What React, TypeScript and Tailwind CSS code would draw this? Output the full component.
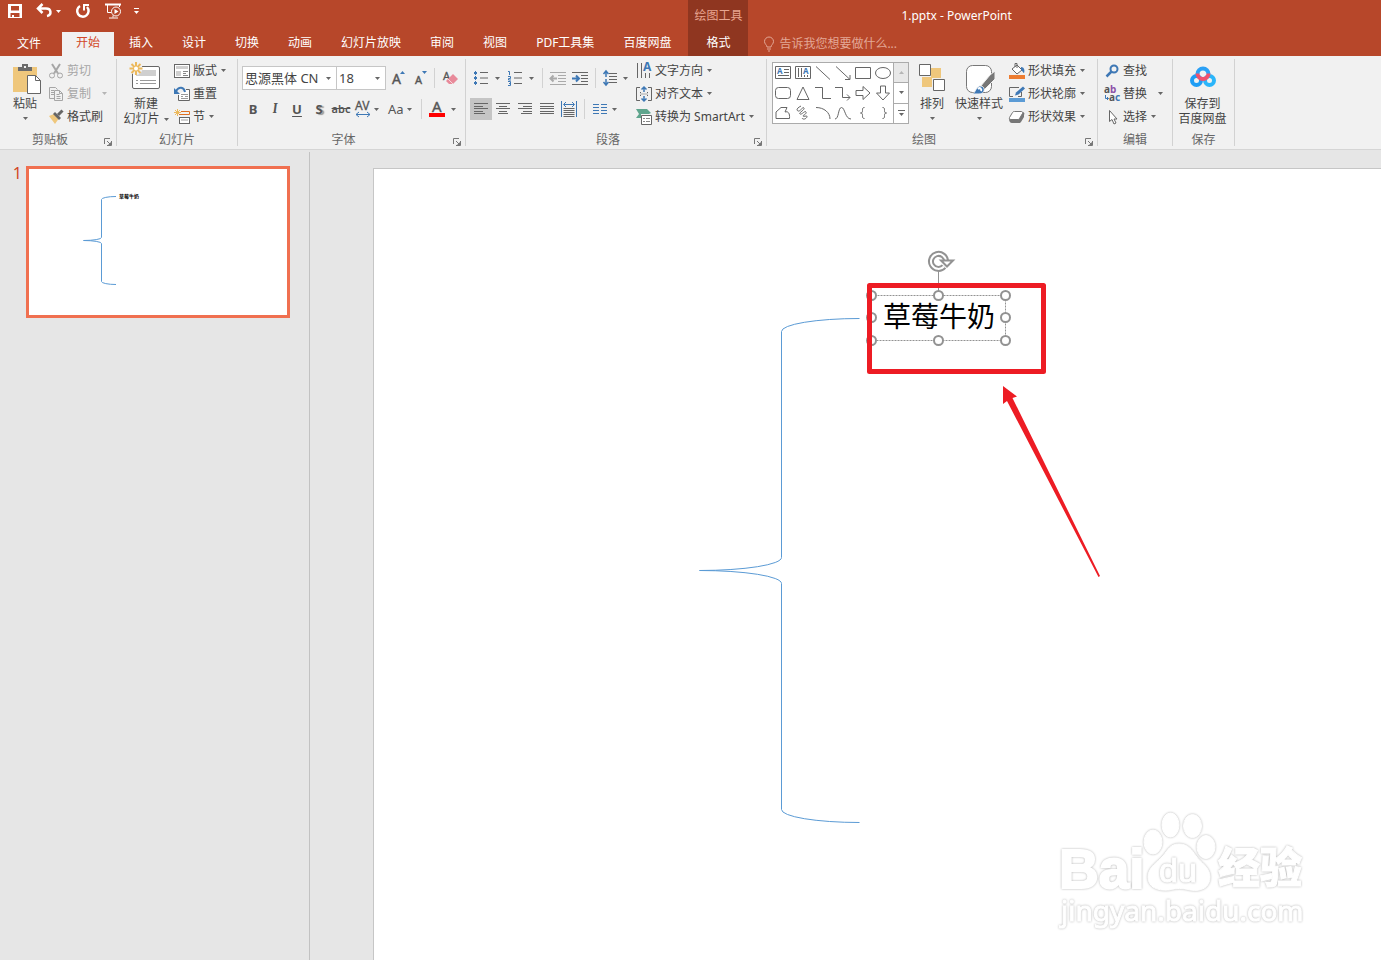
import React from 'react';
import { clsx } from 'clsx';

type IconProps = { w?: number; h?: number; children: React.ReactNode; className?: string };

function Icon({ w = 16, h = 16, children, className }: IconProps) {
  return (
    <svg
      width={w}
      height={h}
      viewBox={`0 0 ${w} ${h}`}
      fill="none"
      stroke="#666"
      className={clsx('shrink-0 overflow-visible', className)}
      aria-hidden="true"
    >
      {children}
    </svg>
  );
}

function Caret({ className = 'text-[#666]' }: { className?: string }) {
  return (
    <svg width="5" height="3" viewBox="0 0 5 3" fill="currentColor" className={clsx('shrink-0', className)} aria-hidden="true">
      <path d="M0 0h5L2.5 3z" />
    </svg>
  );
}

function Launcher({ label }: { label: string }) {
  return (
    <button aria-label={label} className="flex h-3 w-4 items-center justify-center pt-1">
      <Icon w={8} h={8}>
        <path d="M.5 6V.5H6M3 3l3 3M7.5 3v4.5H3" stroke="#777" />
        <path d="M7 4v3H4z" fill="#777" stroke="none" />
      </Icon>
    </button>
  );
}

function Group({ title, launcher, className, children }: {
  title: string;
  launcher?: boolean;
  className?: string;
  children: React.ReactNode;
}) {
  return (
    <section aria-label={title} className={clsx('flex shrink-0 flex-col border-r border-[#d2d2d2]', className)}>
      <div className="flex h-[70px] items-start">{children}</div>
      <div className="mt-auto flex h-3 items-center">
        <span className="flex-1 text-center leading-4 text-[#666]">{title}</span>
        {launcher && <Launcher label={`${title}设置`} />}
      </div>
    </section>
  );
}

function RowButton({ icon, label, caret, disabled, wide }: {
  icon: React.ReactNode;
  label: string;
  caret?: boolean;
  disabled?: boolean;
  wide?: boolean;
}) {
  return (
    <button disabled={disabled} className={clsx('flex h-[23px] items-center gap-[3px] whitespace-nowrap', disabled && 'text-[#a6a6a6]')}>
      {icon}
      <span>{label}</span>
      {caret && <Caret className={clsx(disabled ? 'text-[#b5b5b5]' : 'text-[#666]', wide ? 'ml-2' : 'ml-px')} />}
    </button>
  );
}

function ToolButton({ label, children, caret, active, className }: {
  label: string;
  children: React.ReactNode;
  caret?: boolean;
  active?: boolean;
  className?: string;
}) {
  return (
    <button aria-label={label} className={clsx('flex h-[22px] shrink-0 items-center justify-center gap-[3px]', active && 'bg-[#c5c5c5]', className)}>
      {children}
      {caret && <Caret />}
    </button>
  );
}

function Divider() {
  return <span className="h-5 w-px shrink-0 bg-[#d2d2d2]" />;
}

/* ---------- header ---------- */

function QuickAccess() {
  return (
    <div className="flex h-8 items-start pl-[7px] pt-[3px]">
      <button aria-label="保存">
        <Icon>
          <path
            d="M1 1h14v14H1zM4 3v4.500h8V3zM3.500 10v4H5v-2h2v2h5.500v-4z"
            fill="#fff"
            fillRule="evenodd"
            stroke="none"
          />
        </Icon>
      </button>
      <button aria-label="撤消" className="ml-[13px] flex items-center gap-1">
        <Icon>
          <path d="M6.500 1L2 5.500 6.500 10M2.500 5.500H10c5.500 0 6 6.500 1 7.500" stroke="#fff" strokeWidth="2.500" />
        </Icon>
        <Caret className="text-white" />
      </button>
      <button aria-label="重复" className="ml-[14px]">
        <Icon>
          <path d="M5 3A5.700 5.700 0 1 0 12 4" stroke="#fff" strokeWidth="2.500" />
          <path d="M9 7.500V2h5" stroke="#fff" strokeWidth="2" />
        </Icon>
      </button>
      <button aria-label="从头开始" className="ml-[14px]">
        <Icon w={17} h={16} className="stroke-white">
          <path d="M0 1.500h16" strokeWidth="2" />
          <path d="M2.500 2v7.500H6M4 15h9M8 12.500v2M14.500 2v2" />
          <circle cx="11" cy="8.500" r="4.500" />
          <path d="M9.500 6l4 2.500-4 2.500z" fill="#fff" stroke="none" />
        </Icon>
      </button>
      <button aria-label="自定义快速访问工具栏" className="ml-3">
        <Icon w={6} h={16}>
          <path d="M0 5.500h5" stroke="#fff" />
          <path d="M0 8h5L2.500 11z" fill="#fff" stroke="none" />
        </Icon>
      </button>
    </div>
  );
}

const tabs = ['开始', '插入', '设计', '切换', '动画', '幻灯片放映', '审阅', '视图', 'PDF工具集', '百度网盘'];

function Header() {
  return (
    <header className="flex h-14 shrink-0 bg-[#b7472a] text-white">
      <div className="flex shrink-0 flex-col">
        <QuickAccess />
        <nav className="flex h-6">
          <button className="mr-1 w-[58px]">文件</button>
          <div className="flex gap-px pr-[3px]">
            {tabs.map((tab, i) => (
              <button
                key={tab}
                className={clsx('whitespace-nowrap px-[14px] pb-[2px]', i === 0 && 'bg-[#f1f1f1] text-[#d24726]')}
              >
                {tab}
              </button>
            ))}
          </div>
        </nav>
      </div>
      <div className="flex w-[60px] shrink-0 flex-col items-center bg-[#8f3620]">
        <span className="flex h-8 items-center text-[#e8a48f]">绘图工具</span>
        <button className="h-6 w-full pb-[2px]">格式</button>
      </div>
      <div className="flex min-w-0 flex-1 flex-col">
        <h1 className="flex h-8 items-center pl-[153px]">1.pptx - PowerPoint</h1>
        <label className="flex h-6 items-center gap-1 pl-[15px]">
          <Icon w={12} h={16}>
            <path d="M4 11c0-2-2.500-3-2.500-5.500a4.500 4.500 0 0 1 9 0C10.500 8 8 9 8 11zM4 13h4M5 15h2" stroke="#e3a897" />
          </Icon>
          <input
            aria-label="告诉我您想要做什么"
            placeholder="告诉我您想要做什么..."
            className="w-44 bg-transparent placeholder:text-[#e3a897] focus:outline-none"
          />
        </label>
      </div>
    </header>
  );
}

/* ---------- ribbon groups ---------- */

function ClipboardGroup() {
  return (
    <Group title="剪贴板" launcher className="w-[117px]">
      <button className="ml-[9px] flex w-8 flex-col items-center pt-1">
        <Icon w={30} h={32} className="mb-px ml-1">
          <path d="M1 4h24v25H1z" fill="#efc77c" stroke="none" />
          <path d="M6 8V4h4V1h6v3h4v4z" fill="#6b6b6b" stroke="none" />
          <path d="M12 3h2v2h-2z" fill="#f1f1f1" stroke="none" />
          <path d="M15.500 12.500h8l5 5v13h-13z" fill="#fff" />
          <path d="M23.500 12.500v5h5" />
        </Icon>
        <span className="whitespace-nowrap leading-4">粘贴</span>
        <Caret className="mt-[5px] text-[#666]" />
      </button>
      <div className="ml-[7px] flex flex-col">
        <RowButton
          disabled
          label="剪切"
          icon={
            <Icon className="stroke-[#a6a6a6]">
              <path d="M4 1l6 9.500M12 1L6 10.500" strokeWidth="2" />
              <circle cx="4" cy="12.500" r="2.500" />
              <circle cx="12" cy="12.500" r="2.500" />
            </Icon>
          }
        />
        <RowButton
          disabled
          caret
          wide
          label="复制"
          icon={
            <Icon className="stroke-[#a6a6a6]">
              <path d="M6 12.500H1.500v-11h6l2 2M3 4.500h3M3 6.500h3M3 8.500h3" />
              <path d="M6.500 4.500h5l3 3v7h-8zM11.500 4.500v3h3M8.500 8.500h3M8.500 10.500h4M8.500 12.500h4" />
            </Icon>
          }
        />
        <RowButton
          label="格式刷"
          icon={
            <Icon>
              <path d="M1 7l5-2 4.500 5L7 15z" fill="#efc77c" stroke="none" />
              <path d="M7 3l6 6-2 2-6-6z" fill="#666" stroke="none" />
              <path d="M10 6l4.500-4.500" strokeWidth="3" />
            </Icon>
          }
        />
      </div>
    </Group>
  );
}

function SlidesGroup() {
  return (
    <Group title="幻灯片" className="w-[121px]">
      <button className="ml-[6px] flex w-[46px] flex-col items-center whitespace-nowrap pt-1">
        <Icon w={32} h={32} className="mb-px">
          <rect x="2.500" y="3.500" width="27" height="22" rx="1.500" fill="#fff" />
          <path d="M6 7h20v6H6z" fill="#cfcfcf" stroke="none" />
          <path d="M6 17.500h2M10 17.500h16M6 20.500h2M10 20.500h16" stroke="#999" />
          <circle cx="6" cy="5.500" r="6.500" fill="#f1f1f1" stroke="none" />
          <path d="M6-1v13M-.5 5.500h13M1.500 1l9 9M10.500 1l-9 9" stroke="#ecb95c" strokeWidth="2" />
          <circle cx="6" cy="5.500" r="2" fill="#fff" stroke="none" />
        </Icon>
        <span className="leading-4">新建</span>
        <span className="flex items-center gap-1 leading-[14px]">
          幻灯片
          <Caret />
        </span>
      </button>
      <div className="ml-[5px] flex flex-col">
        <RowButton
          caret
          label="版式"
          icon={
            <Icon>
              <rect x=".5" y="1.500" width="15" height="13" fill="#fff" />
              <path d="M2 3h12v3H2zM2 8h5v5H2z" fill="#cfcfcf" stroke="none" />
              <path d="M9 8.500h5M9 10.500h3M9 12.500h5" stroke="#888" />
            </Icon>
          }
        />
        <RowButton
          label="重置"
          icon={
            <Icon>
              <path d="M4.500 9v5.500h11v-11H12" fill="#fff" />
              <path d="M7 8.500h7M7 10.500h2M11 10.500h3M7 12.500h7" stroke="#999" />
              <path d="M2 5c3-5 8-4 9 1" stroke="#3e78b5" strokeWidth="2" />
              <path d="M0 2v6h6z" fill="#3e78b5" stroke="none" />
            </Icon>
          }
        />
        <RowButton
          caret
          label="节"
          icon={
            <Icon>
              <path d="M3.500 0v7M0 3.500h7M1 1l5 5M6 1L1 6" stroke="#ecb95c" />
              <path d="M7 2.500h8.500v3M5 5.500h10.500" stroke="#e07020" />
              <rect x="5.500" y="8.500" width="10" height="6" fill="#fff" />
              <path d="M7 10h7v2H7z" fill="#cfcfcf" stroke="none" />
            </Icon>
          }
        />
      </div>
    </Group>
  );
}

function Combo({ label, value, className }: { label: string; value: string; className?: string }) {
  return (
    <div className={clsx('relative border border-[#c6c6c6] bg-white', className)}>
      <select aria-label={label} defaultValue={value} className="h-[22px] w-full appearance-none pl-[2px] text-[13px] text-[#444] focus:outline-none">
        <option>{value}</option>
      </select>
      <Caret className="pointer-events-none absolute right-[5px] top-[10px] text-[#666]" />
    </div>
  );
}

function FontGroup() {
  return (
    <Group title="字体" launcher className="w-[228px]">
      <div className="flex w-full flex-col gap-2 pl-1 pt-[7px]">
        <div className="flex items-center">
          <Combo label="字体" value="思源黑体 CN" className="w-[95px]" />
          <Combo label="字号" value="18" className="-ml-px w-[50px]" />
          <ToolButton label="增大字号" className="ml-[6px]">
            <Icon w={14}>
              <text x="0" y="14" fontSize="14" fill="#555" stroke="#555" strokeWidth=".4">A</text>
              <path d="M8 4l2.500-3L13 4z" fill="#3e78b5" stroke="none" />
            </Icon>
          </ToolButton>
          <ToolButton label="减小字号" className="ml-2">
            <Icon w={14}>
              <text x="1" y="14" fontSize="11" fill="#555" stroke="#555" strokeWidth=".4">A</text>
              <path d="M8 1l2.500 3L13 1z" fill="#3e78b5" stroke="none" />
            </Icon>
          </ToolButton>
          <span className="ml-[6px]" />
          <Divider />
          <ToolButton label="清除所有格式" className="ml-2">
            <Icon>
              <text x="0" y="10" fontSize="11" fill="#555" stroke="#555" strokeWidth=".3">A</text>
              <path d="M3 11l7-7 5 5-5 5H6z" fill="#e88a9a" stroke="none" />
              <path d="M5 9l5 5" stroke="#f7d5da" />
            </Icon>
          </ToolButton>
        </div>
        <div className="flex items-center text-[13px] leading-4 text-[#555]">
          <ToolButton label="加粗" className="w-[22px] font-bold">B</ToolButton>
          <ToolButton label="倾斜" className="w-[22px] font-serif font-bold italic">I</ToolButton>
          <ToolButton label="下划线" className="w-[22px] font-bold underline underline-offset-2">U</ToolButton>
          <ToolButton label="文字阴影" className="w-[22px] font-bold [text-shadow:2px_1px_1px_#999]">S</ToolButton>
          <ToolButton label="删除线" className="w-[22px] text-[11px] font-semibold line-through">abc</ToolButton>
          <ToolButton label="字符间距" caret className="ml-[3px]">
            <Icon>
              <text x="0" y="9" fontSize="12" fill="#555" stroke="#555" strokeWidth=".3">AV</text>
              <path d="M1 13.500h14M4 11l-3 2.500L4 16M12 11l3 2.500-3 2.500" stroke="#3e78b5" />
            </Icon>
          </ToolButton>
          <ToolButton label="更改大小写" caret className="ml-[9px]">Aa</ToolButton>
          <span className="ml-[9px]" />
          <Divider />
          <ToolButton label="字体颜色" caret className="ml-[7px] gap-[6px]">
            <Icon>
              <text x="3" y="11" fontSize="15" fill="#555" stroke="#555" strokeWidth=".4">A</text>
              <path d="M0 12h16v4H0z" fill="#f00" stroke="none" />
            </Icon>
          </ToolButton>
        </div>
      </div>
    </Group>
  );
}

// horizontal rules of a text-alignment glyph, as [start, end] pairs
function AlignIcon({ rows }: { rows: [number, number][] }) {
  return (
    <Icon w={14} h={12}>
      {rows.map(([a, b], i) => (
        <path key={i} d={`M${a} ${i * 2.5 + 0.5}H${b}`} shapeRendering="crispEdges" />
      ))}
    </Icon>
  );
}

function ParagraphGroup() {
  return (
    <Group title="段落" launcher className="w-[301px]">
      <div className="flex w-[168px] shrink-0 flex-col gap-[9px] pl-1 pt-2">
        <div className="flex items-center">
          <ToolButton label="项目符号" caret className="ml-1 gap-[6px]">
            <Icon w={15}>
              <path d="M0 2h3v2H0zM0 7h3v2H0zM0 12h3v2H0zM1 1h1v4H1zM1 6h1v4H1zM1 11h1v4H1z" fill="#3e78b5" stroke="none" />
              <path d="M6 2.500h8M6 8h8M6 13.500h8" />
            </Icon>
          </ToolButton>
          <ToolButton label="编号" caret className="ml-2 gap-[6px]">
            <Icon w={15}>
              <path d="M0 1.500h1.500V5M0 6.500h2.500v2H.5v1.500H3M0 11.500h2.500v4H0M1 13.500h1.500" stroke="#3e78b5" />
              <path d="M6 2.500h8M6 8h8M6 13.500h8" />
            </Icon>
          </ToolButton>
          <span className="ml-2" />
          <Divider />
          <ToolButton label="降低列表级别" className="ml-[7px]">
            <Icon className="stroke-[#aaa]">
              <path d="M0 2.500h16M8 5.500h8M8 8.500h8M8 11.500h8M0 14.500h16" />
              <path d="M0 8.500h7M3.500 5.500l-3 3 3 3" strokeWidth="2" />
            </Icon>
          </ToolButton>
          <ToolButton label="提高列表级别" className="ml-[6px]">
            <Icon>
              <path d="M0 2.500h16M9 5.500h7M9 8.500h7M9 11.500h7M0 14.500h16" />
              <path d="M0 8.500h7M4 5.500l3 3-3 3" stroke="#3e78b5" strokeWidth="2" />
            </Icon>
          </ToolButton>
          <span className="ml-[7px]" />
          <Divider />
          <ToolButton label="行距" caret className="ml-[7px] gap-[5px]">
            <Icon w={15}>
              <path d="M3 1v6M0.500 4L3 1l2.500 3M3 9v6M.5 12L3 15l2.500-3" stroke="#3e78b5" strokeWidth="1.500" />
              <path d="M6 3.500h8M6 6.500h8M6 9.500h8M6 12.500h8" />
            </Icon>
          </ToolButton>
        </div>
        <div className="flex items-center">
          <ToolButton label="左对齐" active className="w-[22px]">
            <AlignIcon rows={[[0, 14], [0, 9], [0, 14], [0, 9], [0, 11]]} />
          </ToolButton>
          <ToolButton label="居中" className="w-[22px]">
            <AlignIcon rows={[[0, 14], [3, 11], [0, 14], [3, 11], [2, 12]]} />
          </ToolButton>
          <ToolButton label="右对齐" className="w-[22px]">
            <AlignIcon rows={[[0, 14], [5, 14], [0, 14], [5, 14], [3, 14]]} />
          </ToolButton>
          <ToolButton label="两端对齐" className="w-[22px]">
            <AlignIcon rows={[[0, 14], [0, 14], [0, 14], [0, 14], [0, 14]]} />
          </ToolButton>
          <ToolButton label="分散对齐" className="w-[22px]">
            <Icon>
              <path d="M.5 0v16M15.500 0v16M3 3.500h10M5 1L2.500 3.500 5 6M11 1l2.500 2.500L11 6" stroke="#3e78b5" />
              <path d="M2.500 7.500h11M2.500 9.500h11M2.500 11.500h11M2.500 13.500h11M2.500 15.500h11" />
            </Icon>
          </ToolButton>
          <span className="ml-1" />
          <Divider />
          <ToolButton label="分栏" caret className="ml-2 gap-[5px]">
            <Icon w={14} h={12}>
              <path d="M0 1.500h6M0 4.500h6M0 7.500h6M0 10.500h6M8 1.500h6M8 4.500h6M8 7.500h6M8 10.500h6" stroke="#3e78b5" />
            </Icon>
          </ToolButton>
        </div>
      </div>
      <div className="ml-[2px] flex flex-col">
        <RowButton
          caret
          label="文字方向"
          icon={
            <Icon>
              <path d="M1.500 0v15M5.500 0v15M9.500 10v5M13.500 10v5" />
              <text x="7" y="8" fontSize="12" fontWeight="700" fill="#3e78b5" stroke="none">A</text>
            </Icon>
          }
        />
        <RowButton
          caret
          label="对齐文本"
          icon={
            <Icon>
              <path d="M4 1.500H.5v13H4M12 1.500h3.500v13H12M4 6.500h1M11 6.500h1M4 9.500h1M11 9.500h1" />
              <path d="M8 1v5M5.500 3.500L8 1l2.500 2.500M8 10v5M5.500 12.500L8 15l2.500-2.500" stroke="#3e78b5" strokeWidth="1.500" />
              <path d="M4 8h8" stroke="#aaa" />
            </Icon>
          }
        />
        <RowButton
          caret
          label="转换为 SmartArt"
          icon={
            <Icon>
              <path d="M0 0h11l4 4-2 1H5v4H0l3-4z" fill="#5fa58d" stroke="none" />
              <path d="M5.500 6.500h10v9h-10z" fill="#fff" />
              <path d="M7 9.500h2M10 9.500h4M7 12.500h2M10 12.500h4" stroke="#888" />
            </Icon>
          }
        />
      </div>
    </Group>
  );
}

const shapes: { name: string; body: React.ReactNode }[] = [
  {
    name: '文本框',
    body: (
      <>
        <path d="M.5 1.500h15v12H.5zM9 4.500h5M9 7.500h5M3 10.500h11" />
        <text x="2" y="9" fontSize="8" fontWeight="700" fill="#3e78b5" stroke="none">A</text>
      </>
    ),
  },
  {
    name: '垂直文本框',
    body: (
      <>
        <path d="M.5 1.500h15v12H.5zM3.500 3v9M6.500 3v9M9.500 10v2M12.500 10v2" />
        <text x="8" y="9" fontSize="8" fontWeight="700" fill="#3e78b5" stroke="none">A</text>
      </>
    ),
  },
  { name: '直线', body: <path d="M1 1.500l14 13" /> },
  { name: '箭头', body: <path d="M1 1.500l14 13M15 10v4.500h-5" /> },
  { name: '矩形', body: <path d="M.5 2.500h15v11H.5z" /> },
  { name: '椭圆', body: <ellipse cx="8" cy="8" rx="7.500" ry="5.500" /> },
  { name: '圆角矩形', body: <rect x=".5" y="2.500" width="15" height="11" rx="3" /> },
  { name: '三角形', body: <path d="M8 2L14 14.500H2z" /> },
  { name: '肘形连接符', body: <path d="M0 2.500h7.500v11H16" /> },
  { name: '肘形箭头', body: <path d="M0 2.500h7.500v10H15M12 9.500l3 3-3 3" /> },
  { name: '右箭头', body: <path d="M1 5.500h7V1.500L15 8l-7 6.500v-4H1z" /> },
  { name: '下箭头', body: <path d="M5.500 1v7H1.500L8 15l6.500-7h-4V1z" /> },
  { name: '任意多边形', body: <path d="M1 13.500V7l5-4.500h6l-2 4.500c3-1 5 1 4.500 6.500z" /> },
  { name: '曲线', body: <path d="M6 1c-4 2-5 4-3 5s5-5 6-3-6 5-4 6 5-4 6-2-3 3-3 4 5-1 4 1-4 3-5 1" /> },
  { name: '弧形', body: <path d="M1 2.500c8 0 14 5 14 11.500" /> },
  { name: '正弦曲线', body: <path d="M0 14c4 0 3-11.500 6.500-11.500S10 14 16 14" /> },
  { name: '左大括号', body: <path d="M9.500 2.500c-2 0-2 1-2 3s-.5 2.500-2 2.500c1.500 0 2 .5 2 2.500s0 3 2 3" /> },
  { name: '右大括号', body: <path d="M7.500 2.500c2 0 2 1 2 3s.5 2.500 2 2.500c-1.500 0-2 .5-2 2.500s0 3-2 3" /> },
];

function DrawingGroup() {
  return (
    <Group title="绘图" launcher className="w-[331px]">
      <div className="ml-[5px] mt-[3px] flex border border-[#ababab] bg-white">
        <div className="grid grid-cols-[repeat(6,20px)] grid-rows-[repeat(3,20px)]">
          {shapes.map((s) => (
            <button key={s.name} aria-label={s.name} className="flex items-center justify-center">
              <Icon>{s.body}</Icon>
            </button>
          ))}
        </div>
        <div className="flex w-[15px] flex-col divide-y divide-[#ababab] border-l border-[#ababab]">
          <button aria-label="上一行" disabled className="flex flex-1 items-center justify-center bg-[#e8e8e8]">
            <Caret className="rotate-180 text-[#b5b5b5]" />
          </button>
          <button aria-label="下一行" className="flex flex-1 items-center justify-center">
            <Caret />
          </button>
          <button aria-label="其他形状" className="flex flex-1 flex-col items-center justify-center gap-[2px]">
            <span className="h-px w-[7px] bg-[#666]" />
            <Caret />
          </button>
        </div>
      </div>
      <button className="ml-[7px] flex w-8 flex-col items-center whitespace-nowrap pt-1">
        <Icon w={28} h={32} className="mb-px">
          <path d="M13 5h10v10H13zM4 14h10v10H4z" fill="#efc77c" stroke="none" />
          <path d="M1.500 1.500h11v11h-11zM15.500 16.500h11v11h-11z" fill="#fff" />
        </Icon>
        <span className="leading-4">排列</span>
        <Caret className="mt-[5px] text-[#666]" />
      </button>
      <button className="ml-[6px] flex w-[50px] flex-col items-center whitespace-nowrap pt-1">
        <Icon w={32} h={32} className="mb-px">
          <rect x="3.500" y="2.500" width="25" height="27" rx="6" fill="#fff" stroke="#777" />
          <path d="M32 8v8L21 27l-4-3 10-12z" fill="#777" stroke="#f1f1f1" />
          <path d="M9 31c4-1 4-9 9-8 5 1 4 8-2 8z" fill="#3e78b5" stroke="#f1f1f1" />
          <path d="M15 26c2-2 4 0 3 2" stroke="#fff" strokeWidth="2" />
        </Icon>
        <span className="leading-4">快速样式</span>
        <Caret className="mt-[5px] text-[#666]" />
      </button>
      <div className="ml-[5px] flex flex-col">
        <RowButton
          caret
          label="形状填充"
          icon={
            <Icon>
              <path d="M3 6l5-4 5 5-5 4zM6 4V.5h2V5" fill="#fff" />
              <path d="M12 4c3 0 4 3 3 6-1 0-1-2-3-3z" fill="#3e78b5" stroke="none" />
              <path d="M0 12h16v4H0z" fill="#ed7d31" stroke="none" />
            </Icon>
          }
        />
        <RowButton
          caret
          label="形状轮廓"
          icon={
            <Icon>
              <path d="M10 1.500H.5v9H4M12.500 6v4.500H9" />
              <path d="M6 9.500l1-3 7-6 2 2-6.500 6z" fill="#3e78b5" stroke="none" />
              <path d="M0 12h16v4H0z" fill="#5b9bd5" stroke="none" />
            </Icon>
          }
        />
        <RowButton
          caret
          label="形状效果"
          icon={
            <Icon>
              <path d="M6 3h7c2 0 3 1 2 3v2l-3 5c-1 1-1 1-2 1H3c-2 0-3-2-3-4z" fill="#777" stroke="none" />
              <path d="M5.500 2.500h7c1 0 1.500 1 1 2l-3 5c-.3.700-1 1-1.500 1H2c-1.500 0-2-1-1.500-2l3-5c.3-.7 1-1 2-1z" fill="#fff" stroke="#777" />
            </Icon>
          }
        />
      </div>
    </Group>
  );
}

function EditGroup() {
  return (
    <Group title="编辑" className="w-[75px]">
      <div className="ml-[6px] flex flex-col">
        <RowButton
          label="查找"
          icon={
            <Icon>
              <circle cx="10" cy="6" r="3.500" stroke="#3e78b5" strokeWidth="2" />
              <path d="M7.500 8.500L2.500 13.500" stroke="#3e78b5" strokeWidth="2.500" />
            </Icon>
          }
        />
        <RowButton
          caret
          wide
          label="替换"
          icon={
            <Icon>
              <text x="0" y="7" fontSize="10" fontWeight="700" fill="#555" stroke="none">
                a<tspan fill="#8c52a8">b</tspan>
              </text>
              <text x="5" y="15" fontSize="10" fontWeight="700" fill="#555" stroke="none">
                a<tspan fill="#3e78b5">c</tspan>
              </text>
              <path d="M1.500 9v3.500h3M3 11l1.500 1.500L3 14" stroke="#3e78b5" />
            </Icon>
          }
        />
        <RowButton
          caret
          label="选择"
          icon={
            <Icon>
              <path d="M5.500 1.500v11l2.500-2 2 4.500 2-1-2-4h3z" fill="#fff" />
            </Icon>
          }
        />
      </div>
    </Group>
  );
}

function SaveGroup() {
  return (
    <Group title="保存" className="w-[62px]">
      <button className="flex w-full flex-col items-center whitespace-nowrap pr-[2px] pt-1">
        <Icon w={28} h={32} className="mb-px">
          <circle cx="7.500" cy="17.500" r="4.500" stroke="#1e9df5" strokeWidth="4" />
          <circle cx="20.500" cy="17.500" r="4.500" stroke="#2bb5fa" strokeWidth="4" />
          <path d="M8.500 11a5.500 5.500 0 0 1 11 0" stroke="#2ba0f5" strokeWidth="4" />
          <path d="M8.500 10.500a5.500 5.500 0 0 0 11 0" stroke="#f0506e" strokeWidth="4" />
        </Icon>
        <span className="leading-4">保存到</span>
        <span className="leading-[14px]">百度网盘</span>
      </button>
    </Group>
  );
}

/* ---------- workspace ---------- */

function ThumbnailPane() {
  return (
    <aside className="mt-[2px] flex w-[310px] shrink-0 items-start border-r border-[#c2c2c2] pt-[14px]">
      <span className="w-[26px] pr-1 text-right text-[16px] leading-[14px] text-[#d24726]">1</span>
      <button aria-label="幻灯片 1" className="relative h-[152px] w-[264px] border-[3px] border-[#f07050] bg-white">
        <svg width="258" height="146" viewBox="0 0 258 146" fill="none" stroke="#5b9bd5">
          <path d="M87 27.500a14.500 3 0 0 0-14.500 3V68.500a18 3 0 0 1-18 3 18 3 0 0 1 18 3v38a14.500 3 0 0 0 14.500 3" />
        </svg>
        <span className="absolute left-[90px] top-[24px] text-[5px] font-bold leading-[6px] text-black">草莓牛奶</span>
      </button>
    </aside>
  );
}

// centres of the resize handles round the text box
const handles = [
  [497.5, 126.5],
  [564.5, 126.5],
  [631.5, 126.5],
  [497.5, 148.5],
  [631.5, 148.5],
  [497.5, 171.5],
  [564.5, 171.5],
  [631.5, 171.5],
];

function Watermark() {
  return (
    <g fill="#fff" stroke="#fff" strokeWidth="1" className="[filter:drop-shadow(0_0_1px_#b4b4b4)]">
      <g className="font-['Liberation_Sans','Noto_Sans_CJK_SC',sans-serif]" fontWeight="700">
        <text x="685" y="719" fontSize="55" strokeWidth="2">Bai</text>
        <text x="844" y="714" fontSize="42" fontWeight="900">经验</text>
      </g>
      <ellipse cx="779" cy="673" rx="9" ry="12" />
      <ellipse cx="796.500" cy="656" rx="8.500" ry="12" />
      <ellipse cx="818.500" cy="657" rx="9" ry="11.500" />
      <ellipse cx="832" cy="678" rx="9" ry="11.500" />
      <path d="M805 675c9 0 13 6 17 12s14 11 14 21-8 15-20 13c-8-2-13-2-21 0-12 1-21-3-21-13s10-15 15-21 7-12 16-12z" />
      <text
        x="785"
        y="713"
        fontSize="34"
        className="font-['Liberation_Sans',sans-serif] [filter:drop-shadow(0_0_1px_#b4b4b4)]"
      >
        du
      </text>
      <text x="687" y="752" fontSize="28">jingyan.baidu.com</text>
    </g>
  );
}

function Slide() {
  return (
    <div className="relative ml-[63px] mt-[18px] min-w-0 flex-1 overflow-hidden border-l border-t border-[#c6c6c6] bg-white">
      <svg width="1007" height="791" viewBox="0 0 1007 791" fill="none" className="absolute left-0 top-0">
        <path
          d="M485.500 149.500a78 13 0 0 0-78 13V388.500a82 13 0 0 1-82 13 82 13 0 0 1 82 13V640.500a78 13 0 0 0 78 13"
          stroke="#5b9bd5"
        />
        <Watermark />
      </svg>
      <p className="absolute left-[509px] top-[127px] whitespace-nowrap text-[28px] leading-10 text-black">草莓牛奶</p>
      <svg width="1007" height="791" viewBox="0 0 1007 791" fill="none" stroke="#929292" className="absolute left-0 top-0">
        <rect x="497.500" y="126.500" width="134" height="45" strokeDasharray="2 1" />
        <path d="M564.500 102v20" />
        <g fill="#fff" strokeWidth="2">
          {handles.map(([x, y]) => (
            <circle key={`${x}-${y}`} cx={x} cy={y} r="4.500" />
          ))}
        </g>
        {/* rotate handle */}
        <path d="M570 97.500a7.500 7.500 0 1 1 2-5" stroke="#929292" strokeWidth="6" />
        <path d="M570 97.500a7.500 7.500 0 1 1 2-5" stroke="#fff" strokeWidth="2" />
        <path d="M567 91.500h12l-6 6z" fill="#fff" strokeWidth="2" />
        <rect x="495.500" y="116.500" width="174" height="86" stroke="#ed1c24" strokeWidth="5" strokeLinejoin="round" />
        <path d="M629 217l14 10.500-4.500 1.500L726 407l-1.500 1L633 232l-4 3z" fill="#ed1c24" stroke="none" />
      </svg>
    </div>
  );
}

export default function App() {
  return (
    <div className="flex h-screen flex-col overflow-hidden bg-[#e6e6e6] font-['Noto_Sans','Noto_Sans_CJK_SC',sans-serif] text-[12px] leading-4 text-[#444]">
      <Header />
      <div className="flex h-[94px] shrink-0 border-b border-[#d5d5d5] bg-[#f1f1f1] pb-[3px] pt-[3px]">
        <ClipboardGroup />
        <SlidesGroup />
        <FontGroup />
        <ParagraphGroup />
        <DrawingGroup />
        <EditGroup />
        <SaveGroup />
      </div>
      <main className="flex min-h-0 flex-1">
        <ThumbnailPane />
        <Slide />
      </main>
    </div>
  );
}
